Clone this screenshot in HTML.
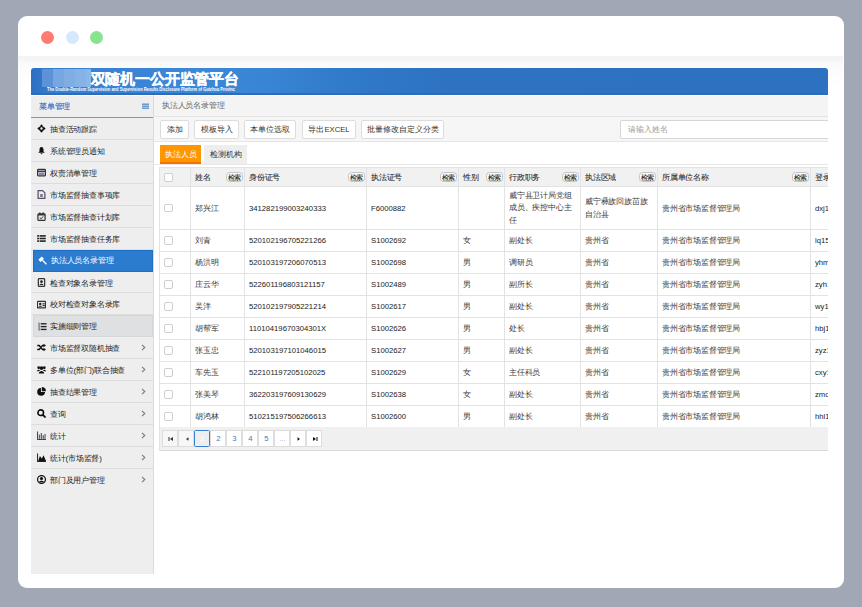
<!DOCTYPE html>
<html><head><meta charset="utf-8">
<style>
*{box-sizing:border-box;margin:0;padding:0}
html,body{width:862px;height:607px;overflow:hidden;background:#a0a8b5;font-family:"Liberation Sans",sans-serif;color:#222}
#win{position:absolute;left:18px;top:16px;width:826px;height:572px;background:#fff;border-radius:9px;overflow:hidden}
.dot{position:absolute;top:14.5px;width:13px;height:13px;border-radius:50%}
#cbg{position:absolute;left:18px;top:56px;width:825px;height:40px;background:linear-gradient(#f4f4f4 0,#f5f5f5 4px,#f9f9f9 6px,#fbfbfb 12px,#fff 32px)}
#banner{position:absolute;left:31px;top:68px;width:797px;height:27px;background:linear-gradient(90deg,#2d6fc2 0,#3680d2 3%,#3b87d8 20%,#3a86d6 28%,#3179c9 40%,#2d73c2 52%,#2c72c0 100%);border-radius:3px 3px 0 0;overflow:hidden;border-bottom:2px solid #2b6cbd}
#sidebar{position:absolute;left:31px;top:95px;width:123px;height:479px;background:#eeeeee;border-right:1px solid #d9dbde}
#sbtop{position:absolute;left:0;top:0;width:122px;height:1px;background:#fff}
#sbh{position:absolute;left:0;top:1px;width:122px;height:21.5px;border-bottom:1.5px solid #6b9bd6;color:#3a7ccc;text-shadow:0 0 0.3px #5a90d8;font-size:8px;letter-spacing:-0.2px;line-height:22px;padding-left:8px}
#sbh svg{position:absolute;left:111px;top:7px}
.mi{position:absolute;left:0;width:122px;height:21.93px;border-bottom:1px solid #dcdcdc;font-size:8px;letter-spacing:-0.2px;line-height:23.6px;padding-left:19px;color:#222;white-space:nowrap}
.mi.act{left:2px;width:120.3px;background:#2b7ccf;color:#fff;border:1px solid #1f6fc6;padding-left:17px;line-height:20.6px;text-shadow:none}
.mi.act .ic{left:3.8px;top:5.2px}
.mi.hov{left:2px;width:120.3px;padding-left:16px;background:#dfe0e2;border:1px solid #d6d7d9;line-height:21.6px}
.mi.hov .ic{left:3.8px;top:5.2px}
.mi.last{border-bottom:none}
.mi .ic{position:absolute;left:5.8px;top:6.2px;width:9px;height:9px}
.mi .chev{position:absolute;left:110px;top:7px}
#main{position:absolute;left:154px;top:96px;width:674px;height:478px;overflow:hidden;background:#fff}
#bc{position:absolute;left:0;top:0;width:674px;height:21px;background:#f4f4f4;border-bottom:1px solid #e4e4e4;font-size:8px;letter-spacing:-0.2px;line-height:20px;padding-left:8px;color:#666}
#tb{position:absolute;left:0;top:21px;width:674px;height:25px;background:#f6f6f6;border-bottom:1.5px solid #e6e6e6}
.btn{position:absolute;top:3px;height:18.5px;background:#fff;border:1px solid #dcdcdc;border-radius:2px;font-size:7.7px;line-height:18.6px;text-align:center;color:#333;white-space:nowrap}
#search{position:absolute;left:466px;top:3px;width:240px;height:19px;background:#fff;border:1px solid #d6d6d6;border-radius:2px;font-size:7.7px;line-height:17px;padding-left:7px;color:#999}
.tab{position:absolute;top:49px;height:19px;font-size:7.7px;line-height:19.6px;text-align:center}
#tabline{position:absolute;left:0;top:68px;width:674px;height:1px;background:#e8e8e8}
#tbl{position:absolute;left:5px;top:71px;width:700px;height:260px}
.thbg{position:absolute;background:#f1f1f1}
.hl{position:absolute;left:0;width:700px;height:1px;background:#e3e3e3}
.vl{position:absolute;top:0;width:1px;height:260px;background:#e3e3e3}
.th{position:absolute;font-size:8px;letter-spacing:-0.2px;line-height:19px;color:#333;text-shadow:0 0 0.2px #aaa;white-space:nowrap}
.td{position:absolute;font-size:8px;letter-spacing:-0.2px;color:#3a3a3a;white-space:nowrap}
.td.lat{font-size:7.7px;letter-spacing:0;text-shadow:none;color:#222}
.pill{position:absolute;width:17px;height:10px;border:1px solid #c4c4c4;border-radius:3.5px;background:#f9f9f9;font-size:7px;letter-spacing:-0.5px;line-height:9.2px;text-indent:0.5px;text-align:center;color:#333;text-shadow:0 0 0.2px #888}
.cb{position:absolute;width:8.5px;height:8.5px;border:1px solid #cfcfcf;border-radius:2px;background:#fff}
#pg{position:absolute;left:5px;top:331px;width:700px;height:23.5px;background:#f0f0f0;border-bottom:1.5px solid #d9d9d9;border-left:1px solid #e3e3e3}
.pb{position:absolute;top:2.8px;width:16px;height:17.2px;background:#fff;border:1px solid #ddd;margin-left:-1px;font-size:7.7px;line-height:15.5px;text-align:center;color:#3a7cc8}
.pb svg{position:absolute;left:4.5px;top:5px}
.pb.dis{background:#f7f7f7}
.pb.act{background:#eeeeee;border-color:#3b7fd0;color:#fff;border-radius:1.5px;z-index:2}
.pb.ell{color:#8fb5e0}
.blk{position:absolute}
</style></head><body>
<div id="win">
  <div class="dot" style="left:23px;background:#ff7b73"></div>
  <div class="dot" style="left:48px;background:#d6e8fb"></div>
  <div class="dot" style="left:72px;background:#86e48f"></div>
</div>
<div id="cbg"></div>
<div id="banner">
<div class="blk" style="left:11px;top:1px;width:11px;height:18px;background:#5d92d6"></div>
<div class="blk" style="left:22px;top:1px;width:11px;height:18px;background:#77a7e0"></div>
<div class="blk" style="left:33px;top:1px;width:11px;height:18px;background:#80aee4"></div>
<div class="blk" style="left:44px;top:1px;width:11px;height:18px;background:#86b3e7"></div>
<div class="blk" style="left:55px;top:1px;width:5px;height:18px;background:#8ab6e8"></div>
<div class="blk" style="left:59.5px;top:2px;font-size:15px;letter-spacing:-0.15px;font-weight:bold;color:#fff;line-height:18px;white-space:nowrap;-webkit-text-stroke:0.3px #fff">双随机一公开监管平台</div>
<div class="blk" style="left:15.8px;top:18px;font-size:5.2px;font-weight:bold;color:#fff;line-height:7px;white-space:nowrap;transform:scaleX(0.773);transform-origin:0 0">The Double-Random Supervision and Supervision Results Disclosure Platform of Guizhou Provinc</div>
</div>
<div id="sidebar">
  <div id="sbtop"></div>
  <div id="sbh">菜单管理<svg width="7" height="6" viewBox="0 0 7 6"><rect x="0" y="0.6" width="7" height="1.1" fill="#3a78c8"/><rect x="0" y="2.6" width="7" height="1.1" fill="#3a78c8"/><rect x="0" y="4.6" width="7" height="1.1" fill="#3a78c8"/></svg></div>
<div class="mi" style="top:23.0px"><svg class="ic" viewBox="0 0 8 8"><path d="M4 0.3L5.5 2H2.5Z M4 7.7L5.5 6H2.5Z M0.3 4L2 2.5V5.5Z M7.7 4L6 2.5V5.5Z" fill="#111"/><circle cx="4" cy="4" r="1.7" fill="none" stroke="#111" stroke-width="1.2"/></svg>抽查活动跟踪</div>
<div class="mi" style="top:44.93px"><svg class="ic" viewBox="0 0 8 8"><path d="M4 0.8C2.6 0.8 2.2 2.1 2.2 3.3V4.9L1.1 6.1H6.9L5.8 4.9V3.3C5.8 2.1 5.4 0.8 4 0.8Z M3.1 6.5a0.9 0.9 0 0 0 1.8 0Z" fill="#111"/></svg>系统管理员通知</div>
<div class="mi" style="top:66.86px"><svg class="ic" viewBox="0 0 8 8"><rect x="0.5" y="1.3" width="7" height="5.6" rx="0.6" fill="none" stroke="#333" stroke-width="1.1"/><rect x="0.5" y="2.3" width="7" height="1.2" fill="#333"/><rect x="1.4" y="4" width="5.2" height="2.2" fill="#8a80a8"/></svg>权责清单管理</div>
<div class="mi" style="top:88.79px"><svg class="ic" viewBox="0 0 8 8"><path d="M1 0.6H5L7 2.6V7.5H1Z" fill="none" stroke="#5a4f6a" stroke-width="1.1"/><rect x="2.7" y="3.6" width="2.6" height="2.6" fill="#8a8090"/></svg>市场监督抽查事项库</div>
<div class="mi" style="top:110.72px"><svg class="ic" viewBox="0 0 8 8"><rect x="0.8" y="1.6" width="6.4" height="5.9" rx="0.8" fill="none" stroke="#333" stroke-width="1.1"/><rect x="0.8" y="1.6" width="6.4" height="1.5" fill="#333"/><path d="M2.4 5L3.6 6.1L5.7 3.9" fill="none" stroke="#6a5a8a" stroke-width="0.9"/><rect x="2" y="0.3" width="1" height="1.8" fill="#333"/><rect x="5" y="0.3" width="1" height="1.8" fill="#333"/></svg>市场监督抽查计划库</div>
<div class="mi" style="top:132.65px"><svg class="ic" viewBox="0 0 8 8"><rect x="0.2" y="1" width="1.5" height="1.4" fill="#111"/><rect x="0.2" y="3.3" width="1.5" height="1.4" fill="#111"/><rect x="0.2" y="5.6" width="1.5" height="1.4" fill="#111"/><rect x="2.3" y="1" width="5.5" height="1.4" fill="#222"/><rect x="2.3" y="3.3" width="5.5" height="1.4" fill="#222"/><rect x="2.3" y="5.6" width="5.5" height="1.4" fill="#222"/></svg>市场监督抽查任务库</div>
<div class="mi act" style="top:154.58px"><svg class="ic" viewBox="0 0 8 8"><path d="M0.3 3.4L3.3 0.4L5.3 2.4L2.3 5.4Z" fill="#fff"/><path d="M3.6 4.2L4.4 3.4L7.9 6.9L7.1 7.7Z" fill="#fff"/></svg>执法人员名录管理</div>
<div class="mi" style="top:176.51px"><svg class="ic" viewBox="0 0 8 8"><rect x="1.2" y="0.5" width="5.6" height="7" rx="0.9" fill="none" stroke="#333" stroke-width="1.1"/><circle cx="4" cy="3.3" r="1.2" fill="#222"/><path d="M2.3 6.3C2.5 4.8 5.5 4.8 5.7 6.3Z" fill="#222"/></svg>检查对象名录管理</div>
<div class="mi" style="top:198.44px"><svg class="ic" viewBox="0 0 8 8"><rect x="0.4" y="1.2" width="7.2" height="5.8" rx="0.6" fill="none" stroke="#333" stroke-width="1.1"/><circle cx="2.9" cy="3.6" r="1.1" fill="#222"/><path d="M1.4 6C1.6 4.7 4.2 4.7 4.4 6Z" fill="#222"/><rect x="4.9" y="2.9" width="2" height="1" fill="#222"/><rect x="4.9" y="4.5" width="2" height="1" fill="#222"/></svg>校对检查对象名录库</div>
<div class="mi hov" style="top:220.37px"><svg class="ic" viewBox="0 0 8 8"><rect x="0.5" y="0.5" width="0.9" height="7.2" fill="#555"/><rect x="2.4" y="1" width="5.2" height="1.2" fill="#222"/><rect x="2.4" y="3.5" width="5.2" height="1.2" fill="#222"/><rect x="2.4" y="6" width="5.2" height="1.2" fill="#222"/></svg>实施细则管理</div>
<div class="mi" style="top:242.3px"><svg class="ic" viewBox="0 0 8 8"><path d="M0.2 2.2H1.9L4.9 5.8H6.2 M0.2 5.8H1.9L4.9 2.2H6.2" fill="none" stroke="#111" stroke-width="1.3"/><path d="M5.8 0.6L8 2.2L5.8 3.8Z M5.8 4.2L8 5.8L5.8 7.4Z" fill="#111"/></svg>市场监督双随机抽查<svg class="chev" width="5" height="7" viewBox="0 0 5 7"><path d="M1 0.8L3.8 3.5L1 6.2" fill="none" stroke="#7a7a7a" stroke-width="1.1"/></svg></div>
<div class="mi" style="top:264.23px"><svg class="ic" viewBox="0 0 8 8"><circle cx="4" cy="2.8" r="1.6" fill="#111"/><circle cx="1.5" cy="2.4" r="1.2" fill="#111"/><circle cx="6.5" cy="2.4" r="1.2" fill="#111"/><path d="M1.6 7.6C1.6 4.6 6.4 4.6 6.4 7.6Z M0 5.8C0 3.8 2.6 3.8 2.6 5Z M8 5.8C8 3.8 5.4 3.8 5.4 5Z" fill="#111"/></svg>多单位(部门)联合抽查<svg class="chev" width="5" height="7" viewBox="0 0 5 7"><path d="M1 0.8L3.8 3.5L1 6.2" fill="none" stroke="#7a7a7a" stroke-width="1.1"/></svg></div>
<div class="mi" style="top:286.16px"><svg class="ic" viewBox="0 0 8 8"><path d="M3.5 0.8A3.5 3.5 0 1 0 7.2 4.5H3.5Z" fill="#111"/><path d="M4.3 0V3.7H8A3.7 3.7 0 0 0 4.3 0Z" fill="#111"/></svg>抽查结果管理<svg class="chev" width="5" height="7" viewBox="0 0 5 7"><path d="M1 0.8L3.8 3.5L1 6.2" fill="none" stroke="#7a7a7a" stroke-width="1.1"/></svg></div>
<div class="mi" style="top:308.09px"><svg class="ic" viewBox="0 0 8 8"><circle cx="3.3" cy="3.3" r="2.5" fill="none" stroke="#111" stroke-width="1.4"/><path d="M5.1 5.1L7.6 7.6" stroke="#111" stroke-width="1.6"/></svg>查询<svg class="chev" width="5" height="7" viewBox="0 0 5 7"><path d="M1 0.8L3.8 3.5L1 6.2" fill="none" stroke="#7a7a7a" stroke-width="1.1"/></svg></div>
<div class="mi" style="top:330.02px"><svg class="ic" viewBox="0 0 8 8"><path d="M0.5 0.5V7.5H8" fill="none" stroke="#444" stroke-width="0.9"/><rect x="1.6" y="3.2" width="1.2" height="3.8" fill="#6a607a"/><rect x="3.3" y="1.8" width="1.2" height="5.2" fill="#6a607a"/><rect x="5" y="3.8" width="1.2" height="3.2" fill="#6a607a"/><rect x="6.6" y="2.6" width="1.1" height="4.4" fill="#6a607a"/></svg>统计<svg class="chev" width="5" height="7" viewBox="0 0 5 7"><path d="M1 0.8L3.8 3.5L1 6.2" fill="none" stroke="#7a7a7a" stroke-width="1.1"/></svg></div>
<div class="mi" style="top:351.95px"><svg class="ic" viewBox="0 0 8 8"><path d="M0.5 0.5V7.5H8" fill="none" stroke="#222" stroke-width="0.9"/><path d="M1 7.1L2.6 2.6L4.3 4.8L5.8 2L8 7.1Z" fill="#111"/></svg>统计(市场监督)<svg class="chev" width="5" height="7" viewBox="0 0 5 7"><path d="M1 0.8L3.8 3.5L1 6.2" fill="none" stroke="#7a7a7a" stroke-width="1.1"/></svg></div>
<div class="mi last" style="top:373.88px"><svg class="ic" viewBox="0 0 8 8"><circle cx="4" cy="4" r="3.5" fill="none" stroke="#111" stroke-width="1.1"/><circle cx="4" cy="3.1" r="1.4" fill="#111"/><path d="M1.7 6.5C2.1 4.7 5.9 4.7 6.3 6.5Z" fill="#111"/></svg>部门及用户管理<svg class="chev" width="5" height="7" viewBox="0 0 5 7"><path d="M1 0.8L3.8 3.5L1 6.2" fill="none" stroke="#7a7a7a" stroke-width="1.1"/></svg></div>
</div>
<div id="main">
  <div id="bc">执法人员名录管理</div>
  <div id="tb">
    <div class="btn" style="left:6px;width:29px">添加</div>
    <div class="btn" style="left:40px;width:45px">模板导入</div>
    <div class="btn" style="left:90px;width:52px">本单位选取</div>
    <div class="btn" style="left:148px;width:54px">导出EXCEL</div>
    <div class="btn" style="left:207px;width:83px">批量修改自定义分类</div>
    <div id="search">请输入姓名</div>
  </div>
  <div class="tab" style="left:6px;width:41px;background:#ff9600;color:#fff;border-bottom:2px solid #f27200">执法人员</div>
  <div class="tab" style="left:50px;width:43px;background:#eeeeee;color:#333">检测机构</div>
  <div id="tabline"></div>
<div id="tbl">
<div class="thbg" style="left:0;top:0;width:700px;height:19px"></div>
<div class="hl" style="top:0px"></div>
<div class="hl" style="top:19px"></div>
<div class="hl" style="top:62px"></div>
<div class="hl" style="top:84px"></div>
<div class="hl" style="top:106px"></div>
<div class="hl" style="top:128px"></div>
<div class="hl" style="top:150px"></div>
<div class="hl" style="top:172px"></div>
<div class="hl" style="top:194px"></div>
<div class="hl" style="top:216px"></div>
<div class="hl" style="top:238px"></div>
<div class="hl" style="top:260px"></div>
<div class="vl" style="left:0px"></div>
<div class="vl" style="left:31px"></div>
<div class="vl" style="left:85px"></div>
<div class="vl" style="left:207px"></div>
<div class="vl" style="left:299px"></div>
<div class="vl" style="left:345px"></div>
<div class="vl" style="left:421px"></div>
<div class="vl" style="left:498px"></div>
<div class="vl" style="left:651px"></div>
<div class="cb" style="left:5px;top:6px"></div>
<div class="th" style="left:36px;top:1px">姓名</div>
<div class="pill" style="left:66.7px;top:5px">检索</div>
<div class="th" style="left:90px;top:1px">身份证号</div>
<div class="pill" style="left:188.7px;top:5px">检索</div>
<div class="th" style="left:212px;top:1px">执法证号</div>
<div class="pill" style="left:280.7px;top:5px">检索</div>
<div class="th" style="left:304px;top:1px">性别</div>
<div class="pill" style="left:326.7px;top:5px">检索</div>
<div class="th" style="left:350px;top:1px">行政职务</div>
<div class="pill" style="left:402.7px;top:5px">检索</div>
<div class="th" style="left:426px;top:1px">执法区域</div>
<div class="pill" style="left:479.7px;top:5px">检索</div>
<div class="th" style="left:503px;top:1px">所属单位名称</div>
<div class="pill" style="left:632.7px;top:5px">检索</div>
<div class="th" style="left:656px;top:1px">登录名</div>
<div class="cb" style="left:5px;top:36.5px"></div>
<div class="td" style="left:36px;top:35.6px;line-height:12.3px">郑兴江</div>
<div class="td lat" style="left:90px;top:35.6px;line-height:12.3px">341282199003240333</div>
<div class="td lat" style="left:212px;top:35.6px;line-height:12.3px">F6000882</div>
<div class="td" style="left:304px;top:35.6px;line-height:12.3px"></div>
<div class="td" style="left:350px;top:23.2px;line-height:12.3px">威宁县卫计局党组<br>成员、疾控中心主<br>任</div>
<div class="td" style="left:426px;top:29.4px;line-height:12.3px">威宁彝族回族苗族<br>自治县</div>
<div class="td" style="left:503px;top:35.6px;line-height:12.3px">贵州省市场监督管理局</div>
<div class="td lat" style="left:656px;top:35.6px;line-height:12.3px">dxj1234</div>
<div class="cb" style="left:5px;top:69.0px"></div>
<div class="td" style="left:36px;top:63.2px;line-height:22px">刘青</div>
<div class="td lat" style="left:90px;top:63.2px;line-height:22px">520102196705221266</div>
<div class="td lat" style="left:212px;top:63.2px;line-height:22px">S1002692</div>
<div class="td" style="left:304px;top:63.2px;line-height:22px">女</div>
<div class="td" style="left:350px;top:63.2px;line-height:22px">副处长</div>
<div class="td" style="left:426px;top:63.2px;line-height:22px">贵州省</div>
<div class="td" style="left:503px;top:63.2px;line-height:22px">贵州省市场监督管理局</div>
<div class="td lat" style="left:656px;top:63.2px;line-height:22px">lq1590</div>
<div class="cb" style="left:5px;top:91.0px"></div>
<div class="td" style="left:36px;top:85.2px;line-height:22px">杨洪明</div>
<div class="td lat" style="left:90px;top:85.2px;line-height:22px">520103197206070513</div>
<div class="td lat" style="left:212px;top:85.2px;line-height:22px">S1002698</div>
<div class="td" style="left:304px;top:85.2px;line-height:22px">男</div>
<div class="td" style="left:350px;top:85.2px;line-height:22px">调研员</div>
<div class="td" style="left:426px;top:85.2px;line-height:22px">贵州省</div>
<div class="td" style="left:503px;top:85.2px;line-height:22px">贵州省市场监督管理局</div>
<div class="td lat" style="left:656px;top:85.2px;line-height:22px">yhm123</div>
<div class="cb" style="left:5px;top:113.0px"></div>
<div class="td" style="left:36px;top:107.2px;line-height:22px">庄云华</div>
<div class="td lat" style="left:90px;top:107.2px;line-height:22px">522601196803121157</div>
<div class="td lat" style="left:212px;top:107.2px;line-height:22px">S1002489</div>
<div class="td" style="left:304px;top:107.2px;line-height:22px">男</div>
<div class="td" style="left:350px;top:107.2px;line-height:22px">副所长</div>
<div class="td" style="left:426px;top:107.2px;line-height:22px">贵州省</div>
<div class="td" style="left:503px;top:107.2px;line-height:22px">贵州省市场监督管理局</div>
<div class="td lat" style="left:656px;top:107.2px;line-height:22px">zyh123</div>
<div class="cb" style="left:5px;top:135.0px"></div>
<div class="td" style="left:36px;top:129.2px;line-height:22px">吴洋</div>
<div class="td lat" style="left:90px;top:129.2px;line-height:22px">520102197905221214</div>
<div class="td lat" style="left:212px;top:129.2px;line-height:22px">S1002617</div>
<div class="td" style="left:304px;top:129.2px;line-height:22px">男</div>
<div class="td" style="left:350px;top:129.2px;line-height:22px">副处长</div>
<div class="td" style="left:426px;top:129.2px;line-height:22px">贵州省</div>
<div class="td" style="left:503px;top:129.2px;line-height:22px">贵州省市场监督管理局</div>
<div class="td lat" style="left:656px;top:129.2px;line-height:22px">wy1234</div>
<div class="cb" style="left:5px;top:157.0px"></div>
<div class="td" style="left:36px;top:151.2px;line-height:22px">胡帮军</div>
<div class="td lat" style="left:90px;top:151.2px;line-height:22px">11010419670304301X</div>
<div class="td lat" style="left:212px;top:151.2px;line-height:22px">S1002626</div>
<div class="td" style="left:304px;top:151.2px;line-height:22px">男</div>
<div class="td" style="left:350px;top:151.2px;line-height:22px">处长</div>
<div class="td" style="left:426px;top:151.2px;line-height:22px">贵州省</div>
<div class="td" style="left:503px;top:151.2px;line-height:22px">贵州省市场监督管理局</div>
<div class="td lat" style="left:656px;top:151.2px;line-height:22px">hbj123</div>
<div class="cb" style="left:5px;top:179.0px"></div>
<div class="td" style="left:36px;top:173.2px;line-height:22px">张玉忠</div>
<div class="td lat" style="left:90px;top:173.2px;line-height:22px">520103197101046015</div>
<div class="td lat" style="left:212px;top:173.2px;line-height:22px">S1002627</div>
<div class="td" style="left:304px;top:173.2px;line-height:22px">男</div>
<div class="td" style="left:350px;top:173.2px;line-height:22px">副处长</div>
<div class="td" style="left:426px;top:173.2px;line-height:22px">贵州省</div>
<div class="td" style="left:503px;top:173.2px;line-height:22px">贵州省市场监督管理局</div>
<div class="td lat" style="left:656px;top:173.2px;line-height:22px">zyz123</div>
<div class="cb" style="left:5px;top:201.0px"></div>
<div class="td" style="left:36px;top:195.2px;line-height:22px">车先玉</div>
<div class="td lat" style="left:90px;top:195.2px;line-height:22px">522101197205102025</div>
<div class="td lat" style="left:212px;top:195.2px;line-height:22px">S1002629</div>
<div class="td" style="left:304px;top:195.2px;line-height:22px">女</div>
<div class="td" style="left:350px;top:195.2px;line-height:22px">主任科员</div>
<div class="td" style="left:426px;top:195.2px;line-height:22px">贵州省</div>
<div class="td" style="left:503px;top:195.2px;line-height:22px">贵州省市场监督管理局</div>
<div class="td lat" style="left:656px;top:195.2px;line-height:22px">cxy123</div>
<div class="cb" style="left:5px;top:223.0px"></div>
<div class="td" style="left:36px;top:217.2px;line-height:22px">张美琴</div>
<div class="td lat" style="left:90px;top:217.2px;line-height:22px">362203197609130629</div>
<div class="td lat" style="left:212px;top:217.2px;line-height:22px">S1002638</div>
<div class="td" style="left:304px;top:217.2px;line-height:22px">女</div>
<div class="td" style="left:350px;top:217.2px;line-height:22px">副处长</div>
<div class="td" style="left:426px;top:217.2px;line-height:22px">贵州省</div>
<div class="td" style="left:503px;top:217.2px;line-height:22px">贵州省市场监督管理局</div>
<div class="td lat" style="left:656px;top:217.2px;line-height:22px">zmq123</div>
<div class="cb" style="left:5px;top:245.0px"></div>
<div class="td" style="left:36px;top:239.2px;line-height:22px">胡鸿林</div>
<div class="td lat" style="left:90px;top:239.2px;line-height:22px">510215197506266613</div>
<div class="td lat" style="left:212px;top:239.2px;line-height:22px">S1002600</div>
<div class="td" style="left:304px;top:239.2px;line-height:22px">男</div>
<div class="td" style="left:350px;top:239.2px;line-height:22px">副处长</div>
<div class="td" style="left:426px;top:239.2px;line-height:22px">贵州省</div>
<div class="td" style="left:503px;top:239.2px;line-height:22px">贵州省市场监督管理局</div>
<div class="td lat" style="left:656px;top:239.2px;line-height:22px">hhl123</div>
</div>
<div id="pg">
<div class="pb dis" style="left:3.4px"><svg width="6" height="6" viewBox="0 0 6 6"><rect x="0.5" y="1" width="1" height="4" fill="#333"/><path d="M5 1L2 3L5 5Z" fill="#333"/></svg></div>
<div class="pb dis" style="left:19.4px"><svg width="6" height="6" viewBox="0 0 6 6"><path d="M4.5 1.2L2 3L4.5 4.8Z" fill="#333"/></svg></div>
<div class="pb act" style="left:35.4px">1</div>
<div class="pb" style="left:51.4px">2</div>
<div class="pb" style="left:67.4px">3</div>
<div class="pb" style="left:83.4px">4</div>
<div class="pb" style="left:99.4px">5</div>
<div class="pb ell" style="left:115.4px">...</div>
<div class="pb" style="left:131.4px"><svg width="6" height="6" viewBox="0 0 6 6"><path d="M1.5 1.2L4 3L1.5 4.8Z" fill="#111"/></svg></div>
<div class="pb" style="left:147.4px"><svg width="6" height="6" viewBox="0 0 6 6"><path d="M1 1L4 3L1 5Z" fill="#111"/><rect x="4.5" y="1" width="1" height="4" fill="#111"/></svg></div>
</div>
</div>
</body></html>
